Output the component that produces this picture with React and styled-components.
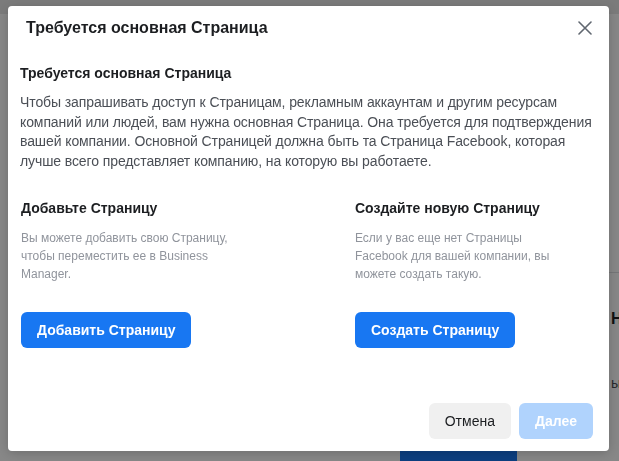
import React from "react";
import styled, { createGlobalStyle } from "styled-components";

const GlobalStyle = createGlobalStyle`
  html, body {
    margin: 0;
    padding: 0;
    height: 100%;
    overflow: hidden;
  }
  body {
    font-family: "Liberation Sans", Arial, Helvetica, sans-serif;
    background: #ffffff;
  }
`;

const Page = styled.div`
  height: 461px;
  background: #ffffff;
`;

const TopBar = styled.div`
  height: 14px;
  background: #e9e9e9;
`;

const PageBody = styled.div`
  display: grid;
  grid-template-columns: 400px 1fr;
`;

const PageMain = styled.div`
  padding-top: 258px;
`;

const PageSection = styled.div`
  border-top: 1px solid #dddfe2;
  padding: 37px 0 0 211px;
`;

const PageHeading = styled.div`
  font-size: 16px;
  font-weight: bold;
  color: #1c1e21;
  white-space: nowrap;
`;

const PageText = styled.div`
  margin-top: 47px;
  font-size: 14px;
  color: #4b4f56;
  white-space: nowrap;
`;

const PageButton = styled.div`
  margin: 45px 0 0 -211px;
  width: 117px;
  height: 36px;
  border-radius: 6px;
  background: #1877f2;
`;

const Overlay = styled.div`
  position: fixed;
  inset: 0;
  background: rgba(0, 0, 0, 0.47);
  display: flex;
  align-items: flex-start;
  padding: 6px 0 0 8px;
`;

const Dialog = styled.div`
  width: 601px;
  height: 445px;
  background: #ffffff;
  border-radius: 4px;
  box-shadow: 0 2px 12px rgba(0, 0, 0, 0.2);
  display: flex;
  flex-direction: column;
  box-sizing: border-box;
`;

const Header = styled.div`
  display: flex;
  align-items: center;
  justify-content: space-between;
  height: 44px;
  padding: 0 14px 0 18px;
`;

const Title = styled.h2`
  margin: 0;
  font-size: 16px;
  font-weight: bold;
  color: #1c1e21;
`;

const CloseButton = styled.button`
  border: 0;
  background: none;
  padding: 0;
  width: 20px;
  height: 20px;
  display: flex;
  align-items: center;
  justify-content: center;
  cursor: pointer;
`;

const Body = styled.div`
  flex: 1;
  padding: 13px 12px 0 12px;
`;

const SubTitle = styled.h3`
  margin: 0;
  font-size: 14px;
  line-height: 20px;
  font-weight: bold;
  color: #1c1e21;
`;

const Lead = styled.p`
  margin: 10px 0 0;
  font-size: 14px;
  line-height: 19.7px;
  letter-spacing: -0.1px;
  color: #4b4f56;
`;

const Options = styled.div`
  display: grid;
  grid-template-columns: 334px 1fr;
  margin-top: 26px;
  padding-left: 1px;
`;

const Option = styled.div`
  display: flex;
  flex-direction: column;
  align-items: flex-start;
`;

const OptionTitle = styled.h4`
  margin: 0;
  font-size: 14px;
  line-height: 20px;
  font-weight: bold;
  color: #1c1e21;
`;

const OptionText = styled.p`
  margin: 11px 0 0;
  max-width: 215px;
  font-size: 12px;
  line-height: 18px;
  color: #90949c;
  min-height: 54px;
`;

const Button = styled.button`
  height: 36px;
  padding: 0 16px;
  border: 0;
  border-radius: 6px;
  font-family: inherit;
  font-size: 14px;
  font-weight: ${(p) => (p.$primary ? "bold" : "normal")};
  color: ${(p) => (p.$primary ? "#ffffff" : "#1c1e21")};
  background: ${(p) =>
    p.$disabled ? "#b0d3fd" : p.$primary ? "#1877f2" : "#f0f0f0"};
  cursor: ${(p) => (p.$disabled ? "default" : "pointer")};
`;

const OptionButton = styled(Button)`
  margin-top: 29px;
`;

const Footer = styled.div`
  display: flex;
  justify-content: flex-end;
  gap: 8px;
  padding: 0 16px 12px;
`;

const CloseIcon = () => (
  <svg width="14" height="14" viewBox="0 0 14 14">
    <path
      d="M1 1 L13 13 M13 1 L1 13"
      stroke="#606770"
      strokeWidth="1.6"
      strokeLinecap="round"
    />
  </svg>
);

export default function App() {
  return (
    <>
      <GlobalStyle />
      <Page>
        <TopBar />
        <PageBody>
          <div />
          <PageMain>
            <PageSection>
              <PageHeading>Настройки</PageHeading>
              <PageText>ы</PageText>
              <PageButton />
            </PageSection>
          </PageMain>
        </PageBody>
      </Page>
      <Overlay>
        <Dialog>
          <Header>
            <Title>Требуется основная Страница</Title>
            <CloseButton aria-label="Закрыть">
              <CloseIcon />
            </CloseButton>
          </Header>
          <Body>
            <SubTitle>Требуется основная Страница</SubTitle>
            <Lead>
              Чтобы запрашивать доступ к Страницам, рекламным аккаунтам и
              другим ресурсам компаний или людей, вам нужна основная Страница.
              Она требуется для подтверждения вашей компании. Основной
              Страницей должна быть та Страница Facebook, которая лучше всего
              представляет компанию, на которую вы работаете.
            </Lead>
            <Options>
              <Option>
                <OptionTitle>Добавьте Страницу</OptionTitle>
                <OptionText>
                  Вы можете добавить свою Страницу, чтобы переместить ее в
                  Business Manager.
                </OptionText>
                <OptionButton $primary>Добавить Страницу</OptionButton>
              </Option>
              <Option>
                <OptionTitle>Создайте новую Страницу</OptionTitle>
                <OptionText>
                  Если у вас еще нет Страницы Facebook для вашей компании, вы
                  можете создать такую.
                </OptionText>
                <OptionButton $primary>Создать Страницу</OptionButton>
              </Option>
            </Options>
          </Body>
          <Footer>
            <Button>Отмена</Button>
            <Button $primary $disabled>
              Далее
            </Button>
          </Footer>
        </Dialog>
      </Overlay>
    </>
  );
}
